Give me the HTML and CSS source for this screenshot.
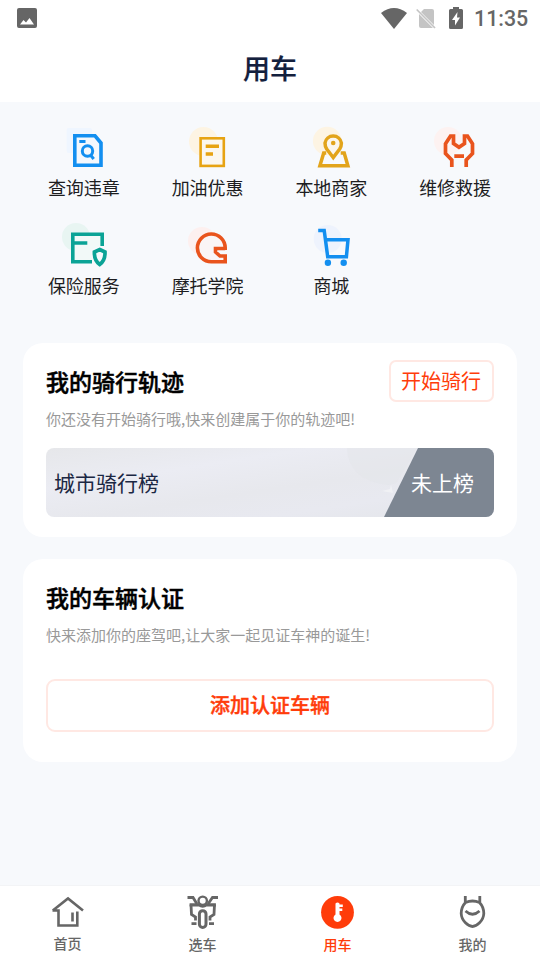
FILE: index.html
```html
<!DOCTYPE html>
<html lang="zh-CN">
<head>
<meta charset="utf-8">
<title>用车</title>
<link rel="stylesheet" href="styles.css">
</head>
<body>
<div class="app">
  <header class="top">
    <div class="status">
      <svg class="photo" width="20" height="20" viewBox="0 0 20 20"><path fill="#666" fill-rule="evenodd" d="M2 0H18Q20 0 20 2V18Q20 20 18 20H2Q0 20 0 18V2Q0 0 2 0ZM3 16.500H17L12.500 10L9 14.500L6.500 12Z"/></svg>
      <svg width="26" height="21" viewBox="0 0 26 21"><path fill="#666" d="M0 5Q13-5 26 5L13 21Z"/></svg>
      <svg class="sim" width="20" height="21" viewBox="0 0 20 21"><path fill="#c4c4c4" d="M8 1H16Q18 1 18 3V17L5 4ZM3 6L17 20H5Q3 20 3 18Z"/><path stroke="#c4c4c4" stroke-width="1.700" d="M.7 1.500L19 20"/></svg>
      <svg class="battery" width="14" height="22" viewBox="0 0 14 22"><path fill="#666" fill-rule="evenodd" d="M4 0H10V2H12.500Q14 2 14 3.500V20.500Q14 22 12.500 22H1.500Q0 22 0 20.500V3.500Q0 2 1.500 2H4ZM8.500 5L3 13H6V18.500L11 10.500H8Z"/></svg>
      <span class="clock">11:35</span>
    </div>
    <h1>用车</h1>
  </header>

  <main>
    <section class="services">
      <a class="service">
        <svg width="48" height="48" viewBox="0 0 48 48"><rect x="6.700" y="4" width="25.300" height="25" rx="2" fill="#eff6ff"/><path fill="#f4f8fd" stroke="#138ff0" stroke-width="3.600" d="M14.800 11.800H35L41 19V41.300H14.800Z"/><path fill="#138ff0" d="M19.300 16h6.200v3h-6.200z"/><g fill="none" stroke="#138ff0" stroke-width="3"><circle cx="27.500" cy="27" r="5.200"/><path d="M30.500 31L33.700 35"/></g></svg>
        <span>查询违章</span>
      </a>
      <a class="service">
        <svg width="48" height="48" viewBox="0 0 48 48"><circle cx="19.500" cy="17.500" r="14.500" fill="#fdf4e3"/><rect x="16.600" y="14.300" width="23.200" height="27.600" fill="#fbf7ef" stroke="#e7a312" stroke-width="2.600"/><path stroke="#e7a312" stroke-width="3.500" d="M21.700 22.300H35M21.700 30H29"/></svg>
        <span>加油优惠</span>
      </a>
      <a class="service">
        <svg width="48" height="48" viewBox="0 0 48 48"><g transform="translate(.7 0)"><circle cx="19.500" cy="17" r="14.300" fill="#fdf4e3"/><g fill="none" stroke="#e2a41b" stroke-width="3.500"><path d="M18.500 29H16L12.200 41.800H40.200L36.500 29H33"/><path fill="#fbf6ed" d="M25.500 33.500L19 25Q17.300 22.500 17.300 19A8.300 8.300 0 0 1 33.700 19Q33.700 22.500 32 25Z"/></g><circle cx="25.500" cy="19" r="2.300" fill="#e2a41b"/></g></svg>
        <span>本地商家</span>
      </a>
      <a class="service">
        <svg width="48" height="48" viewBox="0 0 48 48"><circle cx="17" cy="17" r="14" fill="#fdf2f1"/><path fill="none" stroke="#e9541d" stroke-width="3.700" d="M20.800 43V36L14.500 29.500V19.800L19.500 12H22.500V19.500L28 23.300L33.500 19.500V12H36.500L41.500 19.800V29.500L35.200 36V43M23.300 32.200H33"/></svg>
        <span>维修救援</span>
      </a>
      <a class="service">
        <svg width="48" height="48" viewBox="0 0 48 48"><circle cx="16" cy="15" r="14" fill="#e8f5f2"/><path fill="#f2f9f8" d="M13 12H42V40H13Z"/><path fill="none" stroke="#0ba396" stroke-width="3.600" d="M32 39.800H12.800V12.200H42.200V24M13 21H27.300"/><path fill="#f7f9fc" stroke="#f7f9fc" stroke-width="7" d="M39.700 27.500L45 30Q45.300 38.500 39.700 42.500Q34.100 38.500 34.400 30Z"/><path fill="none" stroke="#0ba396" stroke-width="3.700" d="M39.700 27.500L45 30Q45.300 38.500 39.700 42.500Q34.100 38.500 34.400 30Z"/></svg>
        <span>保险服务</span>
      </a>
      <a class="service">
        <svg width="48" height="48" viewBox="0 0 48 48"><circle cx="18" cy="19" r="14" fill="#fdf0ef"/><path fill="#faf5f6" stroke="#e9541d" stroke-width="3.600" d="M41.200 28V25.800A13.900 13.900 0 1 0 27.400 39.800H41.200V34H36L31.500 30V26.500H41.200"/></svg>
        <span>摩托学院</span>
      </a>
      <a class="service">
        <svg width="48" height="48" viewBox="0 0 48 48"><g transform="translate(.7 0)"><circle cx="20" cy="17" r="14" fill="#eef3fd"/><path fill="none" stroke="#138ff0" stroke-width="3.500" d="M10.500 8.600H16.500L20 34.700H38.700L40.300 17.700H18"/><circle cx="20.200" cy="40.700" r="3.200" fill="#138ff0"/><circle cx="36" cy="40.700" r="3.200" fill="#138ff0"/></g></svg>
        <span>商城</span>
      </a>
    </section>

    <section class="card track">
      <div class="card-head"><h2>我的骑行轨迹</h2><button class="start">开始骑行</button></div>
      <p>你还没有开始骑行哦,快来创建属于你的轨迹吧!</p>
      <div class="rank">
        <svg class="rank-bg" width="448" height="69" viewBox="0 0 448 69"><defs><linearGradient id="haze" x2="1" y2="1"><stop offset="0" stop-color="#e6e7ea"/><stop offset=".3" stop-color="#ebecf3"/><stop offset=".55" stop-color="#e7e8ed"/><stop offset=".75" stop-color="#e8e9f0"/><stop offset="1" stop-color="#e3e5e9"/></linearGradient></defs><path fill="url(#haze)" d="M0 0H448V69H0Z"/><path fill="#e3e5e9" opacity=".5" d="M301 0Q302 32 342 37L350 35L371 0Z"/><path fill="#f3f4f6" opacity=".7" d="M336 43L344 41L345 36L347 45Z"/><path fill="#7d8692" d="M372 0H448V69H338Z"/></svg>
        <span class="rank-name">城市骑行榜</span>
        <span class="rank-state">未上榜</span>
      </div>
    </section>

    <section class="card vehicle">
      <div class="card-head"><h2>我的车辆认证</h2></div>
      <p>快来添加你的座驾吧,让大家一起见证车神的诞生!</p>
      <button class="add">添加认证车辆</button>
    </section>
  </main>

  <nav>
    <a class="tab home">
      <svg width="36" height="36" viewBox="0 0 36 36" fill="none" stroke="#666" stroke-width="2.600"><path d="M2.500 15.500H8.500V30.500H27.300V16.500M2.800 15.500L18 3.500L33 15.500"/><path d="M22.500 17.500V26.500"/></svg>
      <span>首页</span>
    </a>
    <a class="tab">
      <svg width="36" height="36" viewBox="0 0 36 36" fill="none" stroke="#666" stroke-width="2.800"><path d="M2.500 2.500H8L12 9M33 2.500H27.500L23 9M6 9.500L6.500 19.500L10.500 22V25.500M29.500 9.500L29 19.500L25 22V25.500M6.500 28.700H11.500M24 28.700H29"/><path stroke-width="3.200" d="M4.600 9.800H14Q17.700 12.500 21.500 9.800H30.900"/><circle cx="17.700" cy="5.800" r="4.200" stroke-width="2.400"/><rect x="14.400" y="15.700" width="6.600" height="16.800" rx="3.300" stroke-width="3"/></svg>
      <span>选车</span>
    </a>
    <a class="tab active">
      <svg width="36" height="36" viewBox="0 0 36 36"><circle cx="17.500" cy="17.300" r="16.400" fill="#ff3c0a"/><path fill="#fff" d="M15.500 8.500Q17.500 6.500 19.500 8.500V9.500H22.800V12H19.500V13.500H22.300V16H19.500V19.500A4 4 0 1 1 15.500 19.500Z"/></svg>
      <span>用车</span>
    </a>
    <a class="tab">
      <svg width="36" height="36" viewBox="0 0 36 36" fill="none" stroke="#666" stroke-width="2.800"><path d="M10.300 1V8M24.800 1V8M10.500 7.500Q17.500 4.500 24.500 7.500Q28.800 12 28.800 18.500C28.500 26 21.500 31.500 17.500 31.500S6.500 26 6.200 18.500Q6.200 12 10.500 7.500ZM10.500 16Q17.500 22.500 24.500 16"/></svg>
      <span>我的</span>
    </a>
  </nav>
</div>
</body>
</html>
```
FILE: styles.css
```css
* { box-sizing: border-box; }
body {
  margin: 0;
  background: #f7f9fc;
  color: #1d1d1f;
  font-family: Roboto, "Noto Sans CJK SC", sans-serif;
}
svg { display: block; flex: none; }
h1, h2, p { margin: 0; }
button { background: #fff; font-family: inherit; color: #ff3c0a; padding: 0; }

.app { height: 960px; display: flex; flex-direction: column; }

.top { height: 102px; background: #fff; }
.status { height: 36px; display: flex; align-items: center; padding: 0 12px 0 17px; }
.photo { margin-right: auto; }
.sim { margin-left: 9px; }
.battery { margin: 0 11px 0 13px; }
.clock { width: 54px; color: #666; font-size: 21.400px; font-weight: 500; line-height: 36px; white-space: nowrap; padding-top: 2px; }
h1 { color: #13203d; font-size: 27px; font-weight: 500; line-height: 40px; margin-top: 14px; text-align: center; -webkit-text-stroke: .2px; }

main { flex: 1; }
.services {
  display: grid;
  grid-template-columns: repeat(4, 1fr);
  grid-auto-rows: 98px;
  padding: 22px 23px 0 22px;
  height: 241px;
}
.service { display: flex; flex-direction: column; align-items: center; font-size: 18px; line-height: 28px; }
.service span { margin-top: 3px; }

.card { margin: 0 23px 22px; border-radius: 20px; background: #fff; padding: 0 23px; }
.track { height: 194px; padding-top: 17px; }
.vehicle { height: 203px; padding-top: 17px; }
.card-head { height: 42px; display: flex; align-items: center; justify-content: space-between; }
h2 { color: #000; font-size: 23px; font-weight: 500; line-height: 40px; padding-top: 5px; -webkit-text-stroke: .5px; }
.start { width: 105px; height: 42px; border: 2px solid #ffe8e3; border-radius: 7px; font-size: 20px; padding: 0 1px 2px 0; }
.card p { color: #999; font-family: "Noto Sans CJK SC", sans-serif; font-size: 15px; line-height: 24px; margin-top: 5px; }

.rank { display: grid; height: 69px; margin-top: 17px; border-radius: 8px; overflow: hidden; align-items: center; font-size: 21px; }
.rank > * { grid-area: 1 / 1; }
.rank-name { color: #1b2743; padding: 0 0 1px 8px; }
.rank-state { color: #fff; justify-self: end; padding: 0 20px 1px 0; }

.add { width: 100%; height: 53px; margin-top: 32px; border: 2px solid #ffe8e3; border-radius: 9px; font-size: 20px; font-weight: 500; -webkit-text-stroke: .4px; padding-bottom: 2px; }

nav { height: 75px; display: grid; grid-template-columns: repeat(4, 1fr); background: #fff; border-top: 1px solid #f3f4f6; }
.tab { display: flex; flex-direction: column; align-items: center; padding-top: 9px; color: #666; font-size: 14px; line-height: 20px; font-weight: 500; }
.tab span { margin-top: 4px; }
.tab.home span { margin-top: 3px; }
.tab.active { color: #ff3c0a; }
```
